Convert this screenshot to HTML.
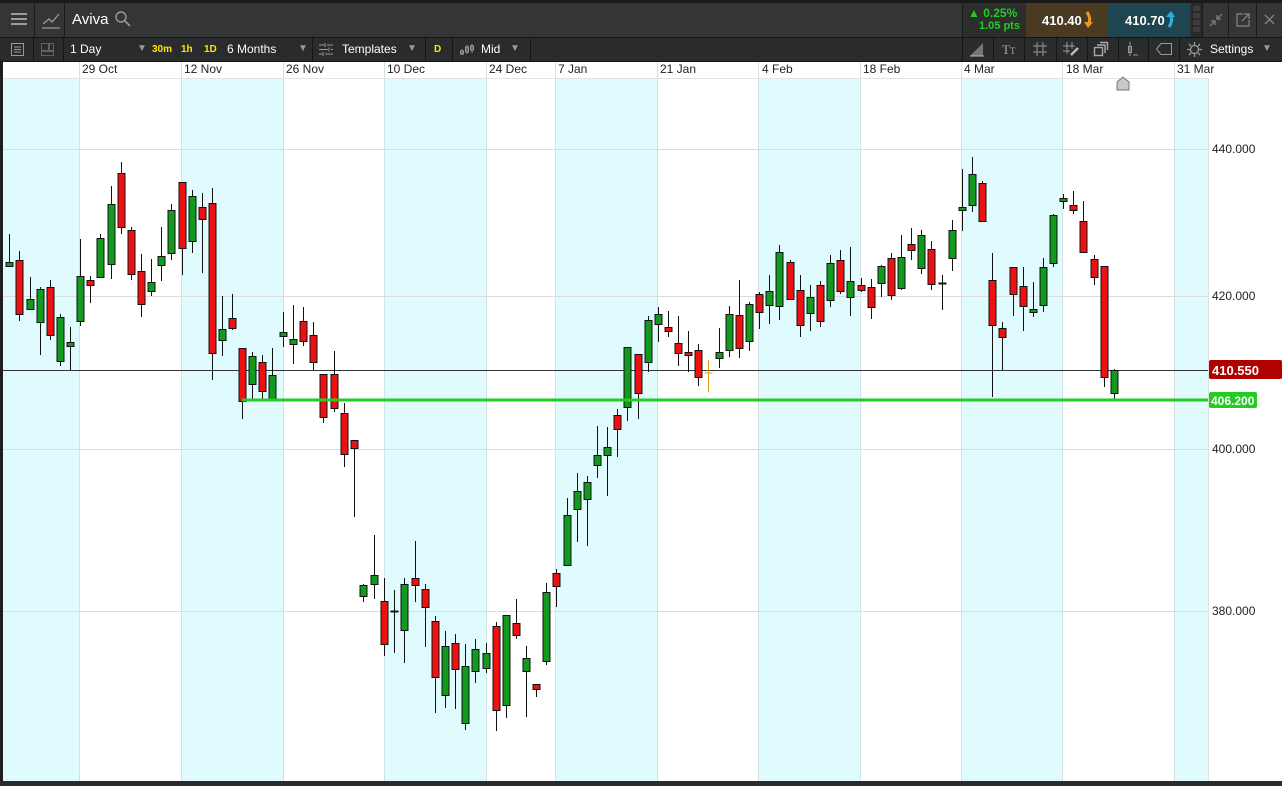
<!DOCTYPE html>
<html><head><meta charset="utf-8">
<style>
*{margin:0;padding:0;box-sizing:border-box}
body{width:1282px;height:786px;overflow:hidden;background:#1e1e1e;font-family:"Liberation Sans",sans-serif;position:relative}
.a{position:absolute}
.t1{left:0;top:0;width:1282px;height:37px;background:#333537;border-top:3px solid #1a1a1a}
.t2{left:0;top:37px;width:1282px;height:25px;background:#2a2b2d;border-top:1px solid #141414;border-bottom:1px solid #141414}
.w{color:#fff;font-size:12px;font-weight:bold}
.y{color:#ffe500;font-size:10px;font-weight:bold}
.sep{width:1px;background:#161616}
.dt{top:62px;font-size:12px;color:#222}
.pl{left:1212px;font-size:12px;color:#222}
</style></head><body>
<div class="a t1"></div>
<div class="a" style="left:0;top:3px;width:35px;height:34px;border-right:1px solid #1a1a1a"></div>
<div class="a" style="left:11px;top:13px;width:16px;height:2px;background:#9a9a9a;box-shadow:0 5px 0 #9a9a9a,0 10px 0 #9a9a9a"></div>
<div class="a" style="left:35px;top:3px;width:30px;height:34px;border-right:1px solid #1a1a1a"></div>
<svg class="a" style="left:40px;top:8px" width="22" height="22"><path d="M3 16 L9 11 L12 14 L19 6" stroke="#9a9a9a" fill="none" stroke-width="1.3"/><path d="M2 20 H20" stroke="#9a9a9a" stroke-width="1.3"/></svg>
<div class="a" style="left:72px;top:11px;color:#fff;font-size:15px">Aviva</div>
<svg class="a" style="left:114px;top:10px" width="18" height="18"><circle cx="7" cy="7" r="5" stroke="#9a9a9a" fill="none" stroke-width="1.4"/><path d="M11 11 L16 16" stroke="#9a9a9a" stroke-width="1.6"/></svg>
<div class="a" style="left:962px;top:3px;width:64px;height:34px;background:#2c2e2c;border-left:1px solid #1a1a1a"></div>
<div class="a" style="left:968px;top:6px;color:#22cc22;font-size:12px;font-weight:bold">▲ 0.25%</div>
<div class="a" style="left:979px;top:20px;color:#22cc22;font-size:11px;font-weight:bold">1.05 pts</div>
<div class="a" style="left:1026px;top:3px;width:82px;height:34px;background:#4a3a22"></div>
<div class="a w" style="left:1042px;top:13px;font-size:13px">410.40</div>
<svg class="a" style="left:1083px;top:11px" width="12" height="18"><path d="M4 1 Q8 7 6 12" stroke="#e89a20" stroke-width="3" fill="none"/><path d="M1 11 L10 11 L5 17 Z" fill="#e89a20"/></svg>
<div class="a" style="left:1108px;top:3px;width:82px;height:34px;background:#1f4650"></div>
<div class="a w" style="left:1125px;top:13px;font-size:13px">410.70</div>
<svg class="a" style="left:1165px;top:10px" width="12" height="18"><path d="M4 17 Q8 11 6 6" stroke="#2ab0e0" stroke-width="3" fill="none"/><path d="M1 7 L10 7 L6 1 Z" fill="#2ab0e0"/></svg>
<div class="a" style="left:1191px;top:3px;width:11px;height:34px;background:#2a2a2a"></div>
<div class="a" style="left:1193px;top:6px;width:7px;height:5px;background:#3c3c3c;box-shadow:0 7px 0 #3c3c3c,0 14px 0 #3c3c3c,0 21px 0 #3c3c3c"></div>
<div class="a" style="left:1202px;top:3px;width:27px;height:34px;border-left:1px solid #1a1a1a;border-right:1px solid #1a1a1a"></div>
<svg class="a" style="left:1208px;top:12px" width="16" height="16"><path d="M2 14 L6 10 M3 9 H7 V13 M14 2 L10 6 M9 3 V7 H13" stroke="#888" fill="none" stroke-width="1.2"/></svg>
<svg class="a" style="left:1235px;top:12px" width="16" height="16"><path d="M8 2 H2 V14 H14 V8 M9 2 H14 V7 M14 2 L7 9" stroke="#888" fill="none" stroke-width="1.2"/></svg>
<div class="a" style="left:1256px;top:3px;width:1px;height:34px;background:#1a1a1a"></div>
<svg class="a" style="left:1264px;top:14px" width="12" height="12"><path d="M1 1 L10 10 M10 1 L1 10" stroke="#888" stroke-width="1.3"/></svg>

<div class="a t2"></div>
<svg class="a" style="left:10px;top:42px" width="15" height="15"><rect x="1.5" y="1.5" width="12" height="12" fill="none" stroke="#999"/><path d="M4 5 H11 M4 7.5 H11 M4 10 H11" stroke="#999"/></svg>
<div class="a sep" style="left:33px;top:38px;height:23px"></div>
<svg class="a" style="left:40px;top:42px" width="15" height="15"><rect x="1.5" y="1.5" width="7" height="7" fill="none" stroke="#999" stroke-dasharray="1 1"/><rect x="1.5" y="9.5" width="12" height="4" fill="none" stroke="#999" stroke-dasharray="1 1"/><rect x="9.5" y="1.5" width="4" height="7" fill="none" stroke="#999" stroke-dasharray="1 1"/></svg>
<div class="a sep" style="left:63px;top:38px;height:23px"></div>
<div class="a w" style="left:70px;top:42px;font-weight:normal;font-size:12px">1 Day</div>
<div class="a" style="left:137px;top:43px;color:#999;font-size:10px">▼</div>
<div class="a y" style="left:152px;top:44px">30m</div>
<div class="a y" style="left:181px;top:44px">1h</div>
<div class="a y" style="left:204px;top:44px">1D</div>
<div class="a w" style="left:227px;top:42px;font-weight:normal">6 Months</div>
<div class="a" style="left:298px;top:43px;color:#999;font-size:10px">▼</div>
<div class="a sep" style="left:312px;top:38px;height:23px"></div>
<svg class="a" style="left:318px;top:42px" width="16" height="15"><path d="M1 3 H6 M9 3 H15 M1 7.5 H10 M13 7.5 H15 M1 12 H4 M7 12 H15 M7 1 V5 M11 5.5 V9.5 M5 10 V14" stroke="#999"/></svg>
<div class="a w" style="left:342px;top:42px;font-weight:normal">Templates</div>
<div class="a" style="left:407px;top:43px;color:#999;font-size:10px">▼</div>
<div class="a sep" style="left:425px;top:38px;height:23px"></div>
<div class="a y" style="left:434px;top:44px">D</div>
<div class="a sep" style="left:452px;top:38px;height:23px"></div>
<svg class="a" style="left:459px;top:41px" width="16" height="16"><path d="M3 8 V14 M8 4 V13 M13 3 V12" stroke="#999"/><rect x="1.5" y="10" width="3" height="3" fill="none" stroke="#999"/><rect x="6.5" y="6" width="3" height="5" fill="none" stroke="#999"/><rect x="11.5" y="5" width="3" height="4" fill="none" stroke="#999"/></svg>
<div class="a w" style="left:481px;top:42px;font-weight:normal">Mid</div>
<div class="a" style="left:510px;top:43px;color:#999;font-size:10px">▼</div>
<div class="a sep" style="left:530px;top:38px;height:23px"></div>
<div class="a sep" style="left:962px;top:38px;height:23px"></div>
<svg class="a" style="left:968px;top:41px" width="18" height="17"><path d="M2 15 L15 2 V15 Z" fill="#777"/><path d="M2 15 H16" stroke="#bbb"/></svg>
<div class="a sep" style="left:993px;top:38px;height:23px"></div>
<div class="a" style="left:1002px;top:42px;color:#aaa;font-size:13px;font-family:'Liberation Serif',serif">T<span style="font-size:9px">T</span></div>
<div class="a sep" style="left:1024px;top:38px;height:23px"></div>
<svg class="a" style="left:1032px;top:41px" width="16" height="16"><path d="M5 1 V15 M11 1 V15 M1 5 H15 M1 11 H15" stroke="#999"/></svg>
<div class="a sep" style="left:1056px;top:38px;height:23px"></div>
<svg class="a" style="left:1062px;top:41px" width="18" height="16"><path d="M5 1 V13 M10 1 V8 M1 5 H13 M1 10 H8" stroke="#999"/><path d="M9 14 L16 7" stroke="#bbb" stroke-width="2.5"/></svg>
<div class="a sep" style="left:1087px;top:38px;height:23px"></div>
<svg class="a" style="left:1093px;top:41px" width="16" height="16"><rect x="1.5" y="6.5" width="8" height="8" fill="none" stroke="#aaa" stroke-width="1.4"/><path d="M4 4 H12 V12 M7 1.5 H14.5 V9" fill="none" stroke="#aaa" stroke-width="1.4"/></svg>
<div class="a sep" style="left:1118px;top:38px;height:23px"></div>
<svg class="a" style="left:1126px;top:41px" width="14" height="16"><path d="M4 1 V15" stroke="#999"/><rect x="2.5" y="5.5" width="3" height="6" fill="none" stroke="#999"/><path d="M7 14 H12" stroke="#999"/></svg>
<div class="a sep" style="left:1148px;top:38px;height:23px"></div>
<svg class="a" style="left:1155px;top:42px" width="18" height="14"><path d="M6 1.5 H16.5 V12.5 H6 L1.5 7 Z" fill="none" stroke="#999"/></svg>
<div class="a sep" style="left:1179px;top:38px;height:23px"></div>
<svg class="a" style="left:1186px;top:41px" width="17" height="17"><circle cx="8.5" cy="8.5" r="4" fill="none" stroke="#999" stroke-width="1.3"/><path d="M8.5 1 V4 M8.5 13 V16 M1 8.5 H4 M13 8.5 H16 M3 3 L5 5 M12 12 L14 14 M14 3 L12 5 M3 14 L5 12" stroke="#999" stroke-width="1.3"/></svg>
<div class="a w" style="left:1210px;top:42px;font-weight:normal">Settings</div>
<div class="a" style="left:1262px;top:43px;color:#999;font-size:10px">▼</div>

<div class="a" style="left:3px;top:62px;width:1279px;height:719px;background:#fff"></div>
<svg class="a" style="left:0;top:0" width="1282" height="786" id="ch">
<g id="bands"></g>
<g stroke="#dcdcdc" stroke-width="1"><path d="M3 149.5 H1208 M3 296.5 H1208 M3 449.5 H1208 M3 611.5 H1208"/></g>
<path d="M3 370.5 H1208" stroke="#333" stroke-width="1"/>
<g id="cs"></g>
<path d="M242 400 H1208" stroke="#22cc22" stroke-width="3"/>
<path d="M1117 90 V82 L1123 77 L1129 82 V90 Z" fill="#c8c8c8" stroke="#777"/>
<rect x="1208" y="78" width="74" height="703" fill="#fff"/>
<path d="M1208.5 78 V781" stroke="#e0e0e0"/>
<rect x="1209" y="360" width="73" height="19" rx="2" fill="#b00000"/>
<text x="1212" y="375" fill="#fff" font-family="Liberation Sans" font-weight="bold" font-size="13">410.550</text>
<rect x="1209" y="392" width="48" height="16" rx="2" fill="#22cc22"/>
<text x="1211" y="405" fill="#fff" font-family="Liberation Sans" font-weight="bold" font-size="12">406.200</text>
</svg>
<div class="a pl" style="top:142px">440.000</div>
<div class="a pl" style="top:289px">420.000</div>
<div class="a pl" style="top:442px">400.000</div>
<div class="a pl" style="top:604px">380.000</div>
<div class="a dt" style="left:82px">29 Oct</div>
<div class="a dt" style="left:184px">12 Nov</div>
<div class="a dt" style="left:286px">26 Nov</div>
<div class="a dt" style="left:387px">10 Dec</div>
<div class="a dt" style="left:489px">24 Dec</div>
<div class="a dt" style="left:558px">7 Jan</div>
<div class="a dt" style="left:660px">21 Jan</div>
<div class="a dt" style="left:762px">4 Feb</div>
<div class="a dt" style="left:863px">18 Feb</div>
<div class="a dt" style="left:964px">4 Mar</div>
<div class="a dt" style="left:1066px">18 Mar</div>
<div class="a dt" style="left:1177px">31 Mar</div>
<div class="a" style="left:0;top:781px;width:1282px;height:5px;background:#2a2b2d"></div>
<script>
var NS="http://www.w3.org/2000/svg";
function el(p,n,a){var e=document.createElementNS(NS,n);for(var k in a)e.setAttribute(k,a[k]);p.appendChild(e);return e}
var b=document.getElementById("bands");
var bands=[[3,79],[181,283],[384,486],[555,657],[758,860],[961,1062],[1174,1208]];
bands.forEach(function(r){el(b,"rect",{x:r[0],y:78,width:r[1]-r[0],height:703,fill:"#dffbfd"})});
[79,181,283,384,486,555,657,758,860,961,1062,1174].forEach(function(x){el(b,"path",{d:"M"+(x+.5)+" 62 V781",stroke:"#d2e2e6"})});
el(b,"path",{d:"M3 78.5 H1208",stroke:"#e4e4e4"});
var D=[[9,262,266,234,267,'g'],[19,260,314,251,321,'r'],[30,299,309,277,309,'g'],[40,289,322,287,355,'g'],[50,287,335,280,340,'r'],[60,317,361,314,366,'g'],[70,342,346,327,370,'g'],[80,276,321,239,326,'g'],[90,280,285,276,303,'r'],[100,238,277,234,278,'g'],[111,204,264,186,279,'g'],[121,173,227,162,234,'r'],[131,230,274,227,280,'r'],[141,271,304,254,317,'r'],[151,282,291,259,296,'g'],[161,256,265,227,281,'g'],[171,210,253,204,260,'g'],[182,182,248,182,275,'r'],[192,196,241,190,253,'g'],[202,207,219,193,273,'r'],[212,203,353,188,380,'r'],[222,329,340,296,356,'g'],[232,318,328,294,330,'r'],[242,348,401,348,419,'r'],[252,356,384,352,399,'g'],[262,362,391,355,399,'r'],[272,375,399,348,399,'g'],[283,332,336,312,347,'g'],[293,339,344,305,364,'g'],[303,321,341,307,346,'r'],[313,335,362,322,370,'r'],[323,374,417,374,423,'r'],[334,374,408,351,412,'r'],[344,413,454,403,467,'r'],[354,440,448,440,517,'r'],
[363,585,596,584,602,'g'],[374,575,584,535,599,'g'],[384,601,644,578,656,'r'],[394,611,611,590,653,'k'],[404,584,630,578,663,'g'],[415,578,585,541,602,'r'],[425,589,607,584,647,'r'],[435,621,677,616,713,'r'],[445,646,695,631,708,'g'],[455,643,669,634,709,'r'],[465,666,723,644,730,'g'],[475,649,671,639,683,'g'],[486,653,668,643,673,'g'],[496,626,710,622,731,'r'],[506,615,705,615,718,'g'],[516,623,635,599,639,'r'],[526,658,671,646,717,'g'],[536,684,689,684,697,'r'],[546,592,661,583,665,'g'],[556,573,586,569,607,'r'],[567,515,565,498,566,'g'],[577,491,509,473,542,'g'],[587,482,499,476,546,'g'],[597,455,465,426,478,'g'],[607,447,455,427,496,'g'],[617,415,429,409,457,'r'],[627,347,407,347,421,'g'],[638,354,393,354,419,'r'],[648,320,362,316,372,'g'],[658,314,324,307,342,'g'],
[668,327,331,311,337,'r'],[678,343,353,316,366,'r'],[688,352,355,331,372,'r'],[698,350,377,344,386,'r'],[708,373,373,360,392,'o'],[719,352,358,328,368,'g'],[729,314,350,306,357,'g'],[739,315,348,280,358,'r'],[749,304,341,302,351,'g'],[759,294,312,292,329,'r'],[769,291,305,275,324,'g'],[779,252,306,245,320,'g'],[790,262,299,260,299,'r'],[800,290,325,275,337,'r'],[810,297,313,285,331,'g'],[820,285,321,281,327,'r'],[830,263,300,255,307,'g'],[840,260,291,250,294,'r'],[850,281,297,247,316,'g'],[861,285,290,278,292,'r'],[871,287,307,279,319,'r'],[881,266,283,265,297,'g'],[891,258,295,253,300,'r'],[901,257,288,235,290,'g'],[911,244,250,228,260,'r'],[921,235,268,230,274,'g'],[931,249,284,241,290,'r'],[942,283,283,275,310,'k'],[952,230,258,220,271,'g'],
[962,207,209,169,231,'g'],[972,174,205,157,212,'g'],[982,183,221,181,222,'r'],[992,280,325,253,397,'r'],[1002,328,337,322,370,'r'],[1013,267,294,267,316,'r'],[1023,286,306,267,331,'r'],[1033,309,311,282,317,'g'],[1043,267,305,258,312,'g'],[1053,215,263,214,267,'g'],[1063,198,201,194,209,'g'],[1073,205,210,191,214,'r'],[1083,221,252,201,252,'r'],[1094,259,277,255,285,'r'],[1104,266,377,266,387,'r'],[1114,370,393,369,399,'g']];
var g=document.getElementById("cs");
D.forEach(function(c){var x=c[0]+.5;
 if(c[5]=='o'){el(g,"path",{d:"M"+x+" "+c[3]+" V"+c[4]+" M"+(x-4)+" "+c[1]+" H"+(x+4),stroke:"#e8961e"});return}
 el(g,"path",{d:"M"+x+" "+c[3]+" V"+c[4],stroke:"#111"});
 if(c[5]=='k'){el(g,"path",{d:"M"+(x-4)+" "+(c[1]+.5)+" H"+(x+4),stroke:"#111","stroke-width":2});return}
 var h=Math.max(c[2]-c[1],3);
 el(g,"rect",{x:c[0]-3,y:c[1]+.5,width:7,height:h,fill:c[5]=='g'?'#119a1e':'#ee1111',stroke:"#111","stroke-width":1});
});
</script>
</body></html>
